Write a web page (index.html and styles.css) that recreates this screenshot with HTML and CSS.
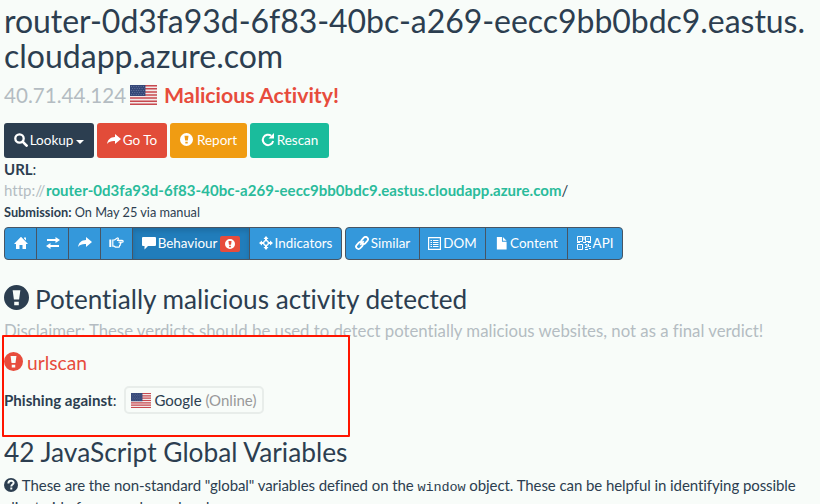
FILE: index.html
```html
<!DOCTYPE html>
<html lang="en">
<head>
<meta charset="utf-8">
<title>Scan result</title>
<link rel="stylesheet" href="styles.css">
</head>
<body>
<svg class="defs" aria-hidden="true">
  <symbol id="flag" viewBox="0 0 28 20" preserveAspectRatio="none">
    <rect width="28" height="20" fill="#f3e9e9"/>
    <path d="M0 .7h28M0 3.8h28M0 6.9h28M0 10h28M0 13.1h28M0 16.2h28M0 19.3h28" stroke="#c7494f" stroke-width="1.5"/>
    <rect width="16" height="11" fill="#354878"/>
    <path d="M1 1.5h14M1 5.5h14M1 9.5h14M2 3.5h13M2 7.5h13" stroke="#7180a3" stroke-width=".8" stroke-dasharray="1 1.5"/>
  </symbol>
  <symbol id="alert" viewBox="0 0 24 24">
    <path fill="currentColor" fill-rule="evenodd" d="M12 0a12 12 0 1 1 0 24a12 12 0 0 1 0-24zM8.3 5l1.2 9h5l1.2-9zM9.8 16v3.5h4.4V16z"/>
  </symbol>
  <symbol id="share" viewBox="0 0 14 12">
    <path fill="currentColor" d="M8 0l6 5-6 5V7C4.500 6.800 2 7.500 0 10C.8 5.500 3.500 3.200 8 3z"/>
  </symbol>
</svg>
<main class="page">
  <h1><span class="host">router-0d3fa93d-6f83-40bc-a269-eecc9bb0bdc9.eastus.</span><br>cloudapp.azure.com</h1>
  <div class="verdict"><span class="ip">40.71.44.124</span><svg class="flag"><use href="#flag"/></svg><strong>Malicious Activity!</strong></div>

  <div class="actions">
    <a class="btn lookup"><svg class="i14" viewBox="0 0 14 14"><circle cx="5.500" cy="5.500" r="4.200" fill="none" stroke="currentColor" stroke-width="2.300"/><path d="M8.600 8.600l4 4" stroke="currentColor" stroke-width="2.700" stroke-linecap="round"/></svg><span>Lookup</span><i class="caret"></i></a>
    <a class="btn goto"><svg class="i14"><use href="#share"/></svg><span>Go To</span></a>
    <a class="btn report"><svg class="i13"><use href="#alert"/></svg><span>Report</span></a>
    <a class="btn rescan"><svg class="i14" viewBox="0 0 14 14"><path d="M10.200 2.800A5.200 5.200 0 1 0 12.100 8" fill="none" stroke="currentColor" stroke-width="2"/><path d="M13 0v5.500H7.500z" fill="currentColor"/></svg><span>Rescan</span></a>
  </div>

  <div class="url-label">URL<span class="thin">:</span></div>
  <div class="url"><span class="scheme">http://</span><b>router-0d3fa93d-6f83-40bc-a269-eecc9bb0bdc9.eastus.cloudapp.azure.com</b>/</div>
  <div class="submission"><b>Submission:</b> On May 25 via manual</div>

  <nav class="toolbar">
    <div class="group">
      <a class="tab w-home"><svg class="i14" viewBox="0 0 14 14"><path fill="currentColor" d="M7 .8L14 8h-2v5H8.500V9h-3v4H2V8H0zM10 1.500h2v3l-2-2z"/></svg></a>
      <a class="tab w-icon"><svg class="i14" viewBox="0 0 14 14"><path fill="currentColor" d="M1 3h8.500V1L14 4 9.500 7V5H1zM13 9H4.500V7L0 10l4.500 3v-2H13z"/></svg></a>
      <a class="tab w-icon"><svg class="i14"><use href="#share"/></svg></a>
      <a class="tab w-icon"><svg class="i15" viewBox="0 0 15 14"><path d="M3.800 4h1.700L8 2.200c1-.6 1.800.2 1.200 1.200L8.700 4.300h4.500c1.300 0 1.300 1.800 0 1.800H9.500h1.600c1.100 0 1.100 1.800 0 1.800h-.5c1 0 1 1.700 0 1.700H10c.7 0 .7 1.500-.3 1.500H6.500L5 10.200H3.800z" fill="none" stroke="currentColor" stroke-width="1.200"/><path d="M1.300 3.500v7.500" stroke="currentColor" stroke-width="2"/></svg></a>
      <a class="tab active w-behaviour"><svg class="i14" viewBox="0 0 14 14"><path fill="currentColor" d="M1 1h12q1 0 1 1v7q0 1-1 1H6L2.500 13.500V10H1q-1 0-1-1V2q0-1 1-1z"/></svg><span>Behaviour</span><em class="badge"><svg><use href="#alert"/></svg></em></a>
      <a class="tab w-indicators"><svg class="i14" viewBox="0 0 14 14"><path fill="currentColor" fill-rule="evenodd" d="M7 0l2.500 3H8v1.100A3 3 0 0 1 9.900 6H11V4.500L14 7l-3 2.500V8H9.900A3 3 0 0 1 8 9.900V11h1.500L7 14l-2.500-3H6V9.900A3 3 0 0 1 4.100 8H3v1.500L0 7l3-2.500V6h1.100A3 3 0 0 1 6 4.100V3H4.500zM7 5.300a1.700 1.700 0 1 0 0 3.400a1.700 1.700 0 0 0 0-3.400z"/></svg><span>Indicators</span></a>
    </div>
    <div class="group">
      <a class="tab w-similar"><svg class="i14" viewBox="0 0 14 14"><g fill="none" stroke="currentColor" stroke-width="1.800"><rect x="5.900" y="2" width="7.500" height="4.800" rx="2.300" transform="rotate(-48 9.600 4.400)"/><rect x=".7" y="7.200" width="7.500" height="4.800" rx="2.300" transform="rotate(-48 4.400 9.600)"/><path d="M5.200 8.800l3.500-3.700"/></g></svg><span>Similar</span></a>
      <a class="tab w-dom"><svg class="i13" viewBox="0 0 13 13"><path d="M.6.6h11.800v11.800H.6z" fill="none" stroke="currentColor" stroke-width="1.200"/><path d="M2.500 3.500H4M5 3.500h5.500M2.500 5.500H4M5 5.500h5.500M2.500 7.500H4M5 7.500h5.500M2.500 9.500H4M5 9.500h5.500" stroke="currentColor" stroke-width="1.100"/></svg><span>DOM</span></a>
      <a class="tab w-content"><svg class="i13" viewBox="0 0 13 14"><path fill="currentColor" d="M1.500 0H7v5h5v8.500H1.500zM8 0l4 4H8z"/></svg><span>Content</span></a>
      <a class="tab w-api"><svg class="i14" viewBox="0 0 14 14"><path fill="none" stroke="currentColor" d="M.5.500h5v5h-5zM8.500.500h5v5h-5zM.5 8.500h5v5h-5zM2.500 3h1M10.500 3h1M2.500 11h1M7 0v4M6 6.500h3M0 6.500h3M11 6.500h3M8 8.500h2v3H8M11.500 8v2.500H14M8 13.500h3M12 12.500h2"/></svg><span>API</span></a>
    </div>
  </nav>

  <h2 class="detected"><svg class="i25"><use href="#alert"/></svg><span>Potentially malicious activity detected</span></h2>
  <p class="disclaimer">Disclaimer: These verdicts should be used to detect potentially malicious websites, not as a final verdict!</p>
  <h3 class="source"><svg class="i19"><use href="#alert"/></svg><span>urlscan</span></h3>
  <div class="phishing"><b>Phishing against<span>:</span></b><span class="brand"><svg class="flag-sm"><use href="#flag"/></svg><span>Google <i>(Online)</i></span></span></div>

  <h2 class="globals">42 JavaScript Global Variables</h2>
  <p class="about"><svg class="i14" viewBox="0 0 24 24"><circle cx="12" cy="12" r="12" fill="currentColor"/><path d="M7.500 9.500c0-6 9-6 9-1.300 0 3-4 2.800-4 6.300M10.800 18h3.400" fill="none" stroke="#f8fcf9" stroke-width="3.400"/></svg> <span class="line1">These are the non-standard "global" variables defined on the <code>window</code> object. These can be helpful in identifying possible</span><br><span>client-side frameworks and code.</span></p>
  <div class="highlight"></div>
</main>
</body>
</html>
```
FILE: styles.css
```css
* { box-sizing: border-box; }
html, body { height: 504px; overflow: hidden; }
body { margin: 0; background: #f8fcf9; color: #2c3e50; font: 15px/21px Lato, "Liberation Sans", sans-serif; font-variant-ligatures: none; }
svg { display: block; flex: none; }
.defs { display: none; }
.page { position: relative; width: 820px; height: 504px; padding: 3px 0 0 4px; overflow: hidden; white-space: nowrap; }
h1, h2, h3, p { margin: 0; font-weight: 400; }
h1 { height: 71px; font-size: 32px; line-height: 35px; }
.host { letter-spacing: -.04px; }
.verdict { display: flex; align-items: center; height: 43px; font-size: 20.6px; }
.ip { width: 122px; color: #b4bcc2; }
.flag { width: 27px; height: 20px; margin: -2px 7px 0 4px; }
.verdict strong { color: #e74c3c; font-size: 21.3px; }
.actions { display: flex; gap: 3px; height: 35px; margin-top: 6px; }
.btn { display: flex; align-items: center; justify-content: center; gap: 2px; border-radius: 3px; color: #fff; font-size: 13.5px; }
.btn span { margin-top: -1px; }
.btn .i14, .btn .i13 { margin-top: -2px; }
.lookup { width: 90px; background: #2c3e50; }
.goto { width: 70px; background: #e24c39; }
.report { width: 77px; background: #f09c12; gap: 4px; }
.rescan { width: 79px; background: #1abc9c; }
.i13 { width: 13px; height: 13px; }
.i14 { width: 14px; height: 14px; }
.i15 { width: 15px; height: 14px; }
.i19 { width: 19px; height: 19px; }
.i25 { width: 25px; height: 25px; }
.caret { margin: 3px 0 0 1px; border: 4px solid transparent; border-top-color: #fff; border-bottom: 0; }
.url-label { height: 21px; line-height: 23px; font-weight: 700; }
.thin { font-weight: 400; }
.url { height: 21px; line-height: 22px; }
.url b { color: #2abb9b; letter-spacing: .035px; }
.scheme { display: inline-block; width: 42px; color: #b4bcc2; }
.submission { height: 21px; line-height: 24px; font-size: 12.75px; }
.toolbar { display: flex; gap: 3px; height: 33px; margin-top: 6px; }
.group { display: flex; border: 1px solid #485563; border-radius: 4px; background: #3498db; overflow: hidden; }
.tab { display: flex; align-items: center; justify-content: center; gap: 2px; color: #fff; font-size: 13.4px; }
.tab span { margin-top: -1px; }
.tab > svg { margin-top: -1px; }
.tab + .tab { border-left: 1px solid #485563; }
.w-home { width: 31px; }
.w-icon { width: 32px; }
.w-behaviour { width: 117px; }
.w-indicators { width: 92px; }
.w-similar { width: 73px; }
.w-dom { width: 66px; }
.w-content { width: 82px; }
.w-api { width: 55px; }
.active { background: #217dbb; box-shadow: inset 0 3px 5px rgba(0, 0, 0, .13); }
.badge { display: flex; align-items: center; justify-content: center; width: 20px; height: 16px; margin-left: 1px; border-radius: 2px; background: #e74c3c; }
.badge svg { width: 10px; height: 10px; }
.detected { display: flex; align-items: center; gap: 6px; height: 32px; margin-top: 23px; font-size: 26.15px; line-height: 32px; }
.detected svg { margin-top: -4px; }
.disclaimer { height: 32px; color: #b4bcc2; font-size: 16.78px; line-height: 31px; }
.source { display: flex; align-items: center; gap: 4px; height: 30px; color: #e74c3c; font-size: 19.2px; }
.source svg { margin-top: -1px; }
.phishing { display: flex; align-items: center; height: 28px; margin-top: 9px; }
.phishing b { font-size: 15.1px; }
.phishing b span { font-weight: 400; }
.brand { display: flex; align-items: center; height: 28px; width: 140px; margin-left: 8px; padding-left: 5px; gap: 3px; border: 2px solid #e8edea; border-radius: 5px; }
.brand i { color: #999; font-style: normal; }
.flag-sm { width: 20px; height: 15px; }
.globals { height: 32px; margin-top: 22px; font-size: 26.3px; line-height: 32px; }
.about { margin-top: 6px; line-height: 22px; }
.about svg { display: inline-block; vertical-align: -1px; }
.line1 { letter-spacing: -.075px; }
code { font: 13.5px "Liberation Mono", monospace; }
.highlight { position: absolute; left: 2px; top: 335px; width: 348px; height: 102px; border: 2px solid #ff1500; border-radius: 1px; }
```
